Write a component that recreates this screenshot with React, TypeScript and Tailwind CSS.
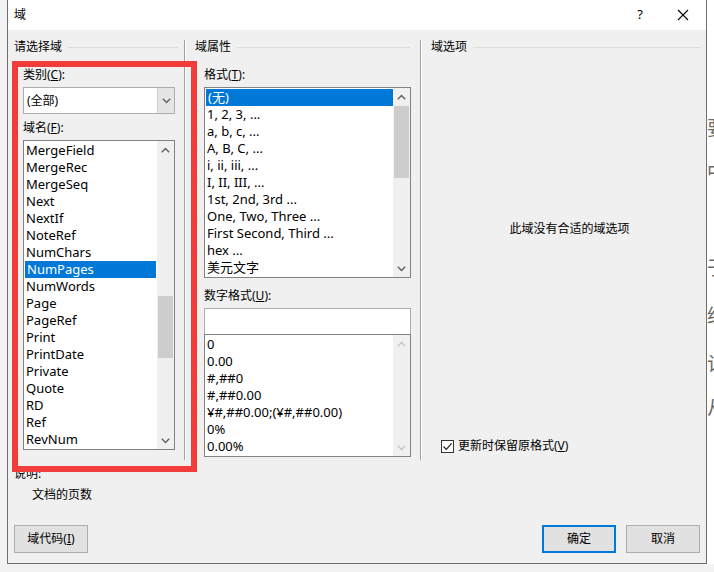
import React from "react";

const font = "font-['Noto_Sans','Noto_Sans_CJK_SC',sans-serif]";

const ChevronUp = ({ color = "#606060" }: { color?: string }) => (
  <svg width="9" height="6" viewBox="0 0 9 6">
    <path d="M0.8 5.2 L4.5 1.4 L8.2 5.2" fill="none" stroke={color} strokeWidth="1.4" />
  </svg>
);

const ChevronDown = ({ color = "#606060" }: { color?: string }) => (
  <svg width="9" height="6" viewBox="0 0 9 6">
    <path d="M0.8 0.8 L4.5 4.6 L8.2 0.8" fill="none" stroke={color} strokeWidth="1.4" />
  </svg>
);

interface ScrollbarProps {
  thumb?: string;
  disabled?: boolean;
}

const Scrollbar = ({ thumb, disabled }: ScrollbarProps) => {
  const color = disabled ? "#c4c4c4" : "#606060";
  return (
    <div className="w-[17px] shrink-0 flex flex-col bg-[#f0f0f0]">
      <div className="h-[17px] flex items-center justify-center">
        <ChevronUp color={color} />
      </div>
      <div className="flex-1 flex flex-col items-center">
        {thumb && <div className={`w-[15px] bg-[#cdcdcd] ${thumb}`} />}
      </div>
      <div className="h-[17px] flex items-center justify-center">
        <ChevronDown color={color} />
      </div>
    </div>
  );
};

interface ListBoxProps {
  items: string[];
  selected?: number;
  className: string;
  thumb?: string;
  disabled?: boolean;
  selWidth: string;
}

const ListBox = ({ items, selected, className, thumb, disabled, selWidth }: ListBoxProps) => (
  <div className={`flex border border-[#828282] bg-white ${className}`}>
    <div className="flex-1 flex flex-col pt-px overflow-hidden">
      {items.map((item, i) => (
        <div
          key={item}
          className={`h-[17px] leading-[17px] pl-[2px] text-[13px] whitespace-nowrap ${
            i === selected ? `bg-[#0078d7] text-white ml-px ${selWidth}` : "text-[#000]"
          }`}
        >
          {item}
        </div>
      ))}
    </div>
    <Scrollbar thumb={thumb} disabled={disabled} />
  </div>
);

const GroupHeader = ({ label, lineMargin }: { label: string; lineMargin: string }) => (
  <div className="h-[14px] flex items-center gap-[6px]">
    <span className="text-[12px] leading-[14px] text-[#000]">{label}</span>
    <div className={`flex-1 h-px bg-[#dcdcdc] ${lineMargin}`} />
  </div>
);

const Label = ({ children, className = "" }: { children: React.ReactNode; className?: string }) => (
  <div className={`h-[14px] text-[12px] leading-[14px] text-[#000] ${className}`}>{children}</div>
);

const Separator = () => (
  <div className="flex shrink-0">
    <div className="w-px bg-[#a0a0a0]" />
    <div className="w-px bg-white" />
  </div>
);

const fieldNames = [
  "MergeField",
  "MergeRec",
  "MergeSeq",
  "Next",
  "NextIf",
  "NoteRef",
  "NumChars",
  "NumPages",
  "NumWords",
  "Page",
  "PageRef",
  "Print",
  "PrintDate",
  "Private",
  "Quote",
  "RD",
  "Ref",
  "RevNum",
];

const formats = [
  "(无)",
  "1, 2, 3, ...",
  "a, b, c, ...",
  "A, B, C, ...",
  "i, ii, iii, ...",
  "I, II, III, ...",
  "1st, 2nd, 3rd ...",
  "One, Two, Three ...",
  "First Second, Third ...",
  "hex ...",
  "美元文字",
];

const numberFormats = ["0", "0.00", "#,##0", "#,##0.00", "¥#,##0.00;(¥#,##0.00)", "0%", "0.00%"];

// partly hidden text of the document behind the dialog
const backdropChars = [
  { c: "要", gap: "mt-[116px]" },
  { c: "中", gap: "mt-[20px]" },
  { c: "于", gap: "mt-[72px]" },
  { c: "织", gap: "mt-[24px]" },
  { c: "计", gap: "mt-[24px]" },
  { c: "从", gap: "mt-[20px]" },
];

const Button = ({ children, primary }: { children: React.ReactNode; primary?: boolean }) => (
  <div
    className={`w-[74px] h-[28px] flex items-center justify-center bg-[#e1e1e1] text-[12px] text-[#000] ${
      primary ? "border-2 border-[#0078d7]" : "border border-[#adadad]"
    }`}
  >
    {children}
  </div>
);

export default function App() {
  return (
    <div className={`relative w-[714px] h-[572px] overflow-hidden flex bg-[#f2f2f2] ${font}`}>
      <div className="w-[7px] shrink-0" />

      {/* Dialog */}
      <div className="w-[700px] h-[564px] shrink-0 flex flex-col border border-[#6e6e6e] border-t-0 bg-[#f0f0f0]">
        {/* Title bar */}
        <div className="h-[30px] shrink-0 flex items-center bg-white">
          <span className="ml-[6px] text-[12px] text-[#000]">域</span>
          <span className="ml-auto text-[13px] text-[#000]">?</span>
          <svg className="ml-[34px] mr-[17px]" width="12" height="12" viewBox="0 0 12 12">
            <path d="M1 1 L11 11 M11 1 L1 11" stroke="#000" strokeWidth="1.1" />
          </svg>
        </div>

        {/* Body */}
        <div className="flex-1 flex flex-col pl-[6px] pt-[10px]">
          <div className="h-[420px] flex">
            {/* Column 1 */}
            <div className="w-[170px] shrink-0 flex flex-col">
              <GroupHeader label="请选择域" lineMargin="mr-[6px]" />
              <div className="pl-[9px] flex flex-col">
                <Label className="mt-[14px]">
                  类别(<span className="underline">C</span>):
                </Label>
                <div className="mt-[5px] w-[152px] h-[27px] flex border border-[#adadad] bg-white">
                  <div className="flex-1 pl-[3px] flex items-center text-[12px] text-[#000]">(全部)</div>
                  <div className="w-[17px] flex items-center justify-center bg-[#e5e5e5] border-l border-[#cfcfcf]">
                    <ChevronDown />
                  </div>
                </div>
                <Label className="mt-[7px]">
                  域名(<span className="underline">F</span>):
                </Label>
                <ListBox
                  className="mt-[5px] w-[152px] h-[310px]"
                  items={fieldNames}
                  selected={7}
                  thumb="mt-[138px] h-[62px]"
                  selWidth="w-[131px]"
                />
              </div>
            </div>

            <Separator />

            {/* Column 2 */}
            <div className="w-[225px] shrink-0 ml-[9px] flex flex-col">
              <GroupHeader label="域属性" lineMargin="mr-[10px]" />
              <div className="pl-[9px] flex flex-col">
                <Label className="mt-[14px]">
                  格式(<span className="underline">T</span>):
                </Label>
                <ListBox
                  className="mt-[5px] w-[207px] h-[191px]"
                  items={formats}
                  selected={0}
                  thumb="mt-px h-[72px]"
                  selWidth="w-[187px]"
                />
                <Label className="mt-[11px]">
                  数字格式(<span className="underline">U</span>):
                </Label>
                <div className="mt-[5px] w-[207px] h-[26px] border border-b-0 border-[#adadad] bg-white" />
                <ListBox
                  className="w-[207px] h-[123px]"
                  items={numberFormats}
                  disabled
                  selWidth=""
                />
              </div>
            </div>

            <Separator />

            {/* Column 3 */}
            <div className="flex-1 ml-[9px] flex flex-col">
              <GroupHeader label="域选项" lineMargin="mr-[5px]" />
              <div className="mt-[168px] h-[14px] pl-[2px] flex justify-center text-[12px] leading-[14px] text-[#000]">
                此域没有合适的域选项
              </div>
              <div className="mt-[203px] ml-[10px] h-[14px] flex items-center gap-[4px]">
                <div className="w-[13px] h-[13px] border border-[#333] bg-white flex items-center justify-center">
                  <svg width="11" height="11" viewBox="0 0 11 11">
                    <path d="M1.5 5.5 L4.3 8.3 L9.6 2.4" fill="none" stroke="#222" strokeWidth="1.2" />
                  </svg>
                </div>
                <span className="text-[12px] leading-[14px] text-[#000]">
                  更新时保留原格式(<span className="underline">V</span>)
                </span>
              </div>
            </div>
          </div>

          {/* Description */}
          <Label className="mt-[7px]">说明:</Label>
          <Label className="mt-[7px] ml-[18px]">文档的页数</Label>

          {/* Buttons */}
          <div className="mt-[23px] flex pr-[6px]">
            <Button>
              域代码(<span className="underline">I</span>)
            </Button>
            <div className="ml-auto flex gap-[10px]">
              <Button primary>确定</Button>
              <Button>取消</Button>
            </div>
          </div>
        </div>
      </div>

      {/* Document behind the dialog */}
      <div className="flex-1 h-[564px] bg-white overflow-hidden">
        <div className="w-[40px] flex flex-col text-[19px] text-[#6a6a6a]">
          {backdropChars.map(({ c, gap }) => (
            <div key={c} className={`h-[24px] leading-[24px] ${gap}`}>
              {c}
            </div>
          ))}
        </div>
      </div>

      {/* Red annotation frame */}
      <div className="absolute left-[12px] top-[61px] w-[185px] h-[411px] border-[6px] border-[#f23b3b]" />
    </div>
  );
}
